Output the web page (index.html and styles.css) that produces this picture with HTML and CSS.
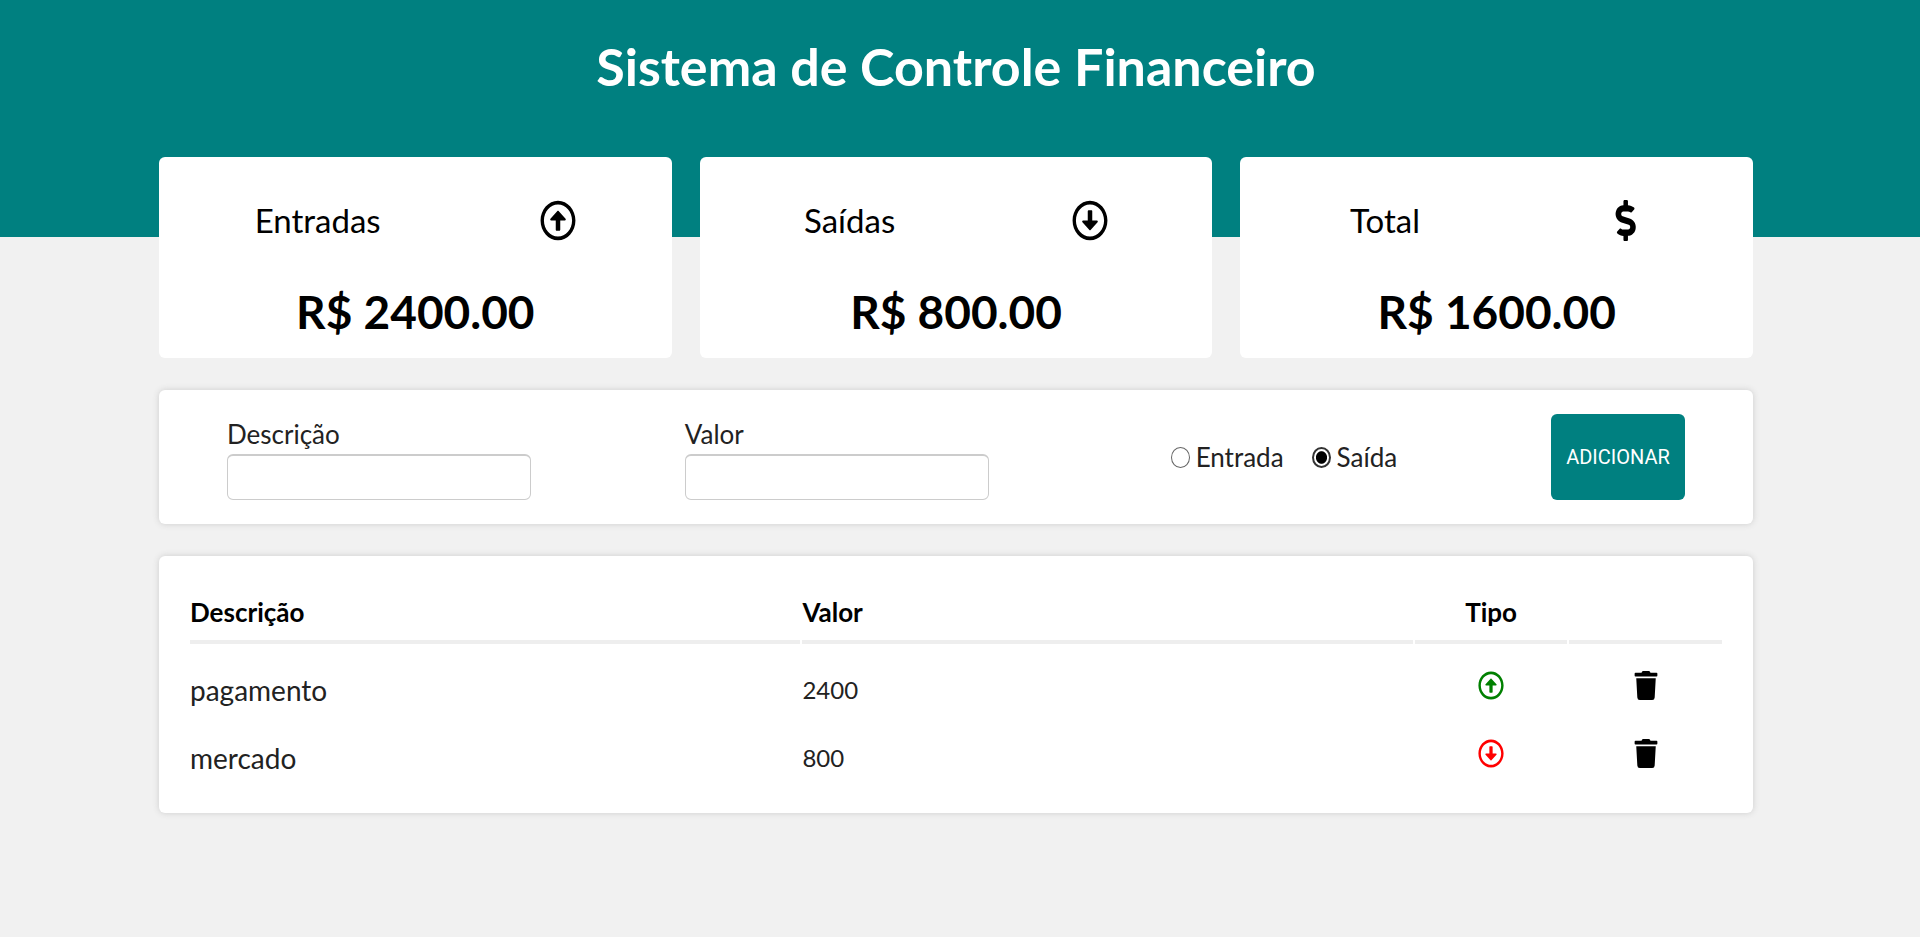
FILE: index.html
```
<!DOCTYPE html>
<html lang="pt-BR">
<head>
<meta charset="utf-8">
<meta name="viewport" content="width=device-width, initial-scale=1">
<title>Sistema de Controle Financeiro</title>
<link rel="stylesheet" href="styles.css">
</head>
<body>
<svg class="sprite" aria-hidden="true">
  <symbol id="up" viewBox="0 0 512 512" preserveAspectRatio="none"><path d="M256 504c137 0 248-111 248-248S393 8 256 8 8 119 8 256s111 248 248 248zm0-448c110.500 0 200 89.500 200 200s-89.500 200-200 200S56 366.500 56 256 145.500 56 256 56zm20 328h-40c-6.600 0-12-5.400-12-12V256h-67c-10.700 0-16-12.900-8.500-20.500l99-99c4.700-4.700 12.300-4.700 17 0l99 99c7.600 7.600 2.200 20.500-8.500 20.500h-67v116c0 6.600-5.400 12-12 12z"/></symbol>
  <symbol id="down" viewBox="0 0 512 512" preserveAspectRatio="none"><path transform="matrix(1 0 0 -1 0 512)" d="M256 504c137 0 248-111 248-248S393 8 256 8 8 119 8 256s111 248 248 248zm0-448c110.500 0 200 89.500 200 200s-89.500 200-200 200S56 366.500 56 256 145.500 56 256 56zm20 328h-40c-6.600 0-12-5.400-12-12V256h-67c-10.700 0-16-12.900-8.500-20.500l99-99c4.700-4.700 12.300-4.700 17 0l99 99c7.600 7.600 2.200 20.500-8.500 20.500h-67v116c0 6.600-5.400 12-12 12z"/></symbol>
  <symbol id="dollar" viewBox="-122 0 512 512" preserveAspectRatio="none"><path d="M209.200 233.400l-108-31.600C88.700 198.200 80 186.500 80 173.500c0-16.300 13.200-29.500 29.500-29.500h66.300c12.200 0 24.200 3.700 34.200 10.500 6.100 4.100 14.300 3.100 19.500-2l34.800-34c7.100-6.900 6.100-18.400-1.800-24.500C238 74.800 207.400 64.100 176 64V16c0-8.800-7.200-16-16-16h-32c-8.800 0-16 7.200-16 16v48h-2.500C45.800 64-5.400 118.700.5 183.600c4.200 46.100 39.400 83.600 83.800 96.600l102.500 30c12.500 3.700 21.200 15.300 21.200 28.300 0 16.300-13.200 29.500-29.500 29.500h-66.300C100 368 88 364.300 78 357.500c-6.100-4.100-14.300-3.100-19.500 2l-34.800 34c-7.100 6.900-6.100 18.400 1.800 24.500 24.500 19.200 55.100 29.900 86.500 30v48c0 8.800 7.200 16 16 16h32c8.800 0 16-7.200 16-16v-48.200c46.600-.9 90.300-28.600 105.700-72.700 21.500-61.600-14.600-124.800-72.500-141.700z"/></symbol>
  <symbol id="trash" viewBox="-32 0 512 512" preserveAspectRatio="none"><path d="M432 32H312l-9.400-18.700A24 24 0 0 0 281.100 0H166.800a23.720 23.720 0 0 0-21.400 13.300L136 32H16A16 16 0 0 0 0 48v32a16 16 0 0 0 16 16h416a16 16 0 0 0 16-16V48a16 16 0 0 0-16-16zM53.200 467a48 48 0 0 0 47.900 45h245.800a48 48 0 0 0 47.900-45L416 128H32z"/></symbol>
</svg>
<header class="header">
  <h1 class="title">Sistema de Controle Financeiro</h1>
</header>
<main class="main">
  <section class="summary" aria-label="Resumo">
    <article class="box">
      <div class="box-head"><h2 class="box-title">Entradas</h2><svg class="icon-lg" aria-hidden="true"><use href="#up"/></svg></div>
      <p class="total">R$ 2400.00</p>
    </article>
    <article class="box">
      <div class="box-head"><h2 class="box-title">Saídas</h2><svg class="icon-lg" aria-hidden="true"><use href="#down"/></svg></div>
      <p class="total">R$ 800.00</p>
    </article>
    <article class="box">
      <div class="box-head"><h2 class="box-title">Total</h2><svg class="icon-lg" aria-hidden="true"><use href="#dollar"/></svg></div>
      <p class="total">R$ 1600.00</p>
    </article>
  </section>
  <form class="panel form">
    <div class="field"><label for="desc">Descrição</label><input class="input" id="desc" type="text"></div>
    <div class="field"><label for="valor">Valor</label><input class="input" id="valor" type="text" inputmode="decimal"></div>
    <div class="radios">
      <label class="option"><input class="radio" type="radio" name="tipo">Entrada</label>
      <label class="option"><input class="radio" type="radio" name="tipo" checked>Saída</label>
    </div>
    <button class="add" type="button">ADICIONAR</button>
  </form>
  <section class="panel list">
    <table class="table">
      <thead>
        <tr><th class="wide" scope="col">Descrição</th><th class="wide" scope="col">Valor</th><th class="mid" scope="col">Tipo</th><th class="mid"></th></tr>
      </thead>
      <tbody>
        <tr>
          <td class="desc">pagamento</td><td class="amount">2400</td>
          <td class="mark"><svg class="icon in" role="img" aria-label="Entrada"><use href="#up"/></svg></td>
          <td class="mark"><button class="remove" type="button" aria-label="Excluir"><svg class="icon"><use href="#trash"/></svg></button></td>
        </tr>
        <tr>
          <td class="desc">mercado</td><td class="amount">800</td>
          <td class="mark"><svg class="icon out" role="img" aria-label="Saída"><use href="#down"/></svg></td>
          <td class="mark"><button class="remove" type="button" aria-label="Excluir"><svg class="icon"><use href="#trash"/></svg></button></td>
        </tr>
      </tbody>
    </table>
  </section>
</main>
</body>
</html>
```
FILE: styles.css
```
* { box-sizing: border-box; margin: 0; padding: 0; }
body { background: #f1f1f1; color: #000; font-family: Lato, "Open Sans", sans-serif; font-size: 26px; }
.sprite { position: absolute; width: 0; height: 0; }
svg { fill: currentColor; }

.header { background: teal; color: #fff; padding: 31px 167px 136px 159px; text-align: center; }
.title { font-size: 52px; line-height: 70px; }

.main { padding: 0 167px 32px 159px; margin-top: -80px; display: flex; flex-direction: column; gap: 32px; }

.summary { display: flex; gap: 28px; }
.box { flex: 1; background: #fff; border-radius: 6px; padding: 16px 16px 18px; }
.box-head { display: flex; align-items: center; justify-content: space-around; padding: 27px 0; }
.box-title { font-size: 33px; line-height: 41px; font-weight: 400; }
.icon-lg { width: 36px; height: 41px; }
.total { margin-top: 16px; font-size: 46px; line-height: 56px; font-weight: 700; text-align: center; }

.panel { background: #fff; border-radius: 6px; box-shadow: 0 0 6px #ccc; }

.form { display: flex; align-items: center; justify-content: space-between; padding: 24px 68px; color: #222; }
.field { display: flex; flex-direction: column; flex: 0 1 304px; }
.field label { line-height: 40px; }
.input { width: 100%; height: 46px; border: 1px solid #ccc; border-top-width: 2px; border-radius: 6px; padding: 0 8px; font: inherit; }
.radios { display: flex; }
.option { display: flex; align-items: center; gap: 6px; margin-left: 28px; }
.radio { appearance: none; width: 19px; height: 21px; border: 1px solid #666; border-radius: 50%; background: #fff; }
.radio:checked { border: 2px solid #333; background: radial-gradient(closest-side, #000 68%, #fff 80%); }
.add { width: 134px; height: 86px; border: 0; border-radius: 6px; background: teal; color: #fff; font: 20px Roboto, sans-serif; }

.list { padding: 31px; }
.table { width: calc(100% + 4px); margin: 0 -2px; table-layout: fixed; border-spacing: 2px; }
.wide { width: 40%; }
th { border-bottom: 4px solid #eee; line-height: 46px; padding-bottom: 5px; text-align: left; }
th.mid { text-align: center; }
td { height: 66px; line-height: 36px; padding-top: 22px; color: #222; }
.desc { font-size: 28px; }
.amount { font-size: 24px; }
.mark { padding-top: 12px; text-align: center; }
.icon { width: 26px; height: 29px; display: block; margin: 0 auto; }
.in { color: green; }
.out { color: red; }
.remove { display: block; margin: 0 auto; border: 0; background: none; color: #000; }
```
